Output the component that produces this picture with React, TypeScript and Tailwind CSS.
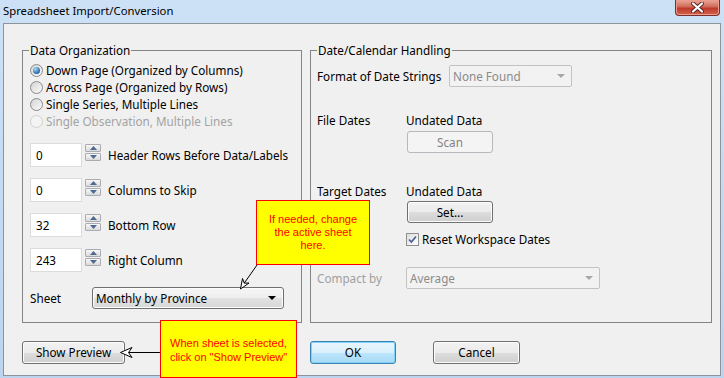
import React from "react";

const btnFace =
  "bg-[linear-gradient(#f2f2f2,#ebebeb_50%,#dddddd_50%,#cfcfcf)] shadow-[inset_0_0_0_1px_#fcfcfc]";

function Radio({ label, checked = false, disabled = false }: { label: string; checked?: boolean; disabled?: boolean }) {
  return (
    <div className="flex h-[17px] items-center">
      <span
        className={`flex h-[13px] w-[13px] items-center justify-center rounded-full border ${
          disabled ? "border-[#d0d0d0] bg-[#f4f4f4]" : "border-[#8a8a8a] bg-linear-to-br from-[#d4d4d4] to-[#fbfbfb]"
        }`}
      >
        {checked && (
          <span className="h-[7px] w-[7px] rounded-full bg-[radial-gradient(circle_at_35%_30%,#a6d8f7,#1d5fa3_75%)]" />
        )}
      </span>
      <span className={`ml-[3px] ${disabled ? "text-[#a3a3a3]" : "text-black"}`}>{label}</span>
    </div>
  );
}

function SpinBtn({ up = false }: { up?: boolean }) {
  return (
    <div className="flex h-[8px] items-center justify-center rounded-[1px] border border-[#a9adb3] bg-linear-to-b from-[#f7f7f7] to-[#dadada]">
      <svg width="7" height="4" viewBox="0 0 7 4">
        <path d={up ? "M0 4L3.5 0L7 4Z" : "M0 0L3.5 4L7 0Z"} fill="#4f6a8f" />
      </svg>
    </div>
  );
}

function SpinRow({ value, label }: { value: string; label: string }) {
  return (
    <div className="flex h-[24px] items-start">
      <div className="flex h-[24px] w-[52px] items-center border border-[#dcdcdc] bg-white pl-[5px]">{value}</div>
      <div className="ml-[3px] mt-[1px] flex w-[16px] flex-col gap-[1px]">
        <SpinBtn up />
        <SpinBtn />
      </div>
      <span className="ml-[7px] self-center">{label}</span>
    </div>
  );
}

function DisabledSelect({ text, width }: { text: string; width: string }) {
  return (
    <div
      className={`flex h-[22px] ${width} items-center justify-between rounded-[2px] border border-[#c3c3c3] bg-[#f2f2f2] pl-[3px] pr-[6px] text-[#8a8a8a]`}
    >
      <span>{text}</span>
      <svg width="8" height="4" viewBox="0 0 8 4">
        <path d="M0 0L4 4L8 0Z" fill="#a8a8a8" />
      </svg>
    </div>
  );
}

export default function App() {
  return (
    <div className="relative h-[378px] w-[724px] overflow-hidden bg-linear-to-b from-[#cde1f6] to-[#bcd4ee] font-['Noto_Sans',sans-serif] text-[11.7px] leading-[15px] text-black">
      {/* title bar */}
      <div className="flex h-[23px] items-start justify-between">
        <span className="ml-[3px] mt-[3px] text-[11.3px]">Spreadsheet Import/Conversion</span>
        <div className="mr-[4px] flex h-[16px] w-[45px] items-center justify-center rounded-b-[4px] border border-t-0 border-[#7a2f2a] bg-[linear-gradient(#e8a99b,#d06a58_45%,#c0392b_55%,#d0644c)] shadow-[inset_0_0_0_1px_#ec9b8c]">
          <svg width="13" height="11" viewBox="0 0 13 11">
            <path d="M2 1.5L11 9.5M11 1.5L2 9.5" stroke="#5a2420" strokeWidth="4" strokeLinecap="round" />
            <path d="M2 1.5L11 9.5M11 1.5L2 9.5" stroke="#ffffff" strokeWidth="2.2" strokeLinecap="round" />
          </svg>
        </div>
      </div>

      {/* client area */}
      <div className="mx-[3px] h-[353px] border border-[#8d949c] bg-[#f0f0f0] pl-[18px] pt-[19px]">
        <div className="flex gap-[8px]">
          {/* Data Organization */}
          <fieldset className="h-[280px] w-[280px] border border-[#848484] pl-[7px]">
            <legend className="-ml-px px-px">Data Organization</legend>
            <div className="mt-[4px] flex flex-col">
              <Radio label="Down Page (Organized by Columns)" checked />
              <Radio label="Across Page (Organized by Rows)" />
              <Radio label="Single Series, Multiple Lines" />
              <Radio label="Single Observation, Multiple Lines" disabled />
            </div>
            <div className="mt-[13px] flex flex-col gap-[11px]">
              <SpinRow value="0" label="Header Rows Before Data/Labels" />
              <SpinRow value="0" label="Columns to Skip" />
              <SpinRow value="32" label="Bottom Row" />
              <SpinRow value="243" label="Right Column" />
            </div>
            <div className="mt-[15px] flex h-[22px] items-center">
              <span className="w-[62px]">Sheet</span>
              <div className="flex h-[22px] w-[192px] items-center justify-between rounded-[3px] border border-[#707070] bg-[linear-gradient(#f6f6f6,#eeeeee_50%,#e2e2e2_50%,#d8d8d8)] pl-[3px] pr-[7px] shadow-[inset_0_0_0_1px_#fcfcfc]">
                <span>Monthly by Province</span>
                <svg width="8" height="4" viewBox="0 0 8 4">
                  <path d="M0 0L4 4L8 0Z" fill="#000000" />
                </svg>
              </div>
            </div>
          </fieldset>

          {/* Date/Calendar Handling */}
          <fieldset className="h-[280px] w-[402px] border border-[#848484] pl-[6px]">
            <legend className="px-px">Date/Calendar Handling</legend>
            <div className="mt-[7px] flex h-[22px] items-center">
              <span className="w-[132px]">Format of Date Strings</span>
              <DisabledSelect text="None Found" width="w-[123px]" />
            </div>
            <div className="mt-[25px] flex h-[16px] items-center">
              <span className="w-[89px]">File Dates</span>
              <span>Undated Data</span>
            </div>
            <div className="ml-[90px] mt-[3px] flex h-[22px] w-[86px] items-center justify-center rounded-[3px] border border-[#b5b9bd] bg-[#f4f4f4] text-[#838383]">
              Scan
            </div>
            <div className="mt-[30px] flex h-[16px] items-center">
              <span className="w-[89px]">Target Dates</span>
              <span>Undated Data</span>
            </div>
            <div className={`ml-[90px] mt-[2px] flex h-[22px] w-[86px] items-center justify-center rounded-[3px] border border-[#707070] ${btnFace}`}>
              Set...
            </div>
            <div className="ml-[89px] mt-[9px] flex h-[14px] items-center">
              <span className="flex h-[13px] w-[13px] items-center justify-center border border-[#8e8f8f] bg-linear-to-br from-[#dcdcdc] to-[#ffffff]">
                <svg width="9" height="9" viewBox="0 0 9 9">
                  <path d="M1 4.5L3.4 7L8 1.5" stroke="#4a5f97" strokeWidth="1.7" fill="none" />
                </svg>
              </span>
              <span className="ml-[3px]">Reset Workspace Dates</span>
            </div>
            <div className="mt-[21px] flex h-[22px] items-center">
              <span className="w-[89px] text-[#a0a0a0]">Compact by</span>
              <DisabledSelect text="Average" width="w-[194px]" />
            </div>
          </fieldset>
        </div>

        {/* dialog buttons */}
        <div className="mt-[18px] flex">
          <div className={`flex h-[23px] w-[103px] items-center justify-center rounded-[3px] border border-[#707070] ${btnFace}`}>
            Show Preview
          </div>
          <div className="ml-[185px] flex h-[23px] w-[86px] items-center justify-center rounded-[3px] border border-[#3c7fb1] bg-[linear-gradient(#eaf6fd,#d9f0fc_50%,#bee6fd_50%,#a7d9f5)] shadow-[inset_0_0_0_1px_#7fd3f8]">
            OK
          </div>
          <div className={`ml-[37px] flex h-[23px] w-[87px] items-center justify-center rounded-[3px] border border-[#707070] ${btnFace}`}>
            Cancel
          </div>
        </div>
      </div>

      {/* annotation callouts */}
      <div className="absolute left-[256px] top-[200px] h-[65px] w-[114px] border border-[#ff0000] bg-[#ffff00] pt-[12px] text-center font-['Liberation_Sans',Arial,sans-serif] text-[11px] leading-[13px] text-[#ff0000]">
        If needed, change
        <br />
        the active sheet
        <br />
        here.
      </div>
      <div className="absolute left-[160px] top-[320px] h-[58px] w-[137px] border border-[#ff0000] bg-[#ffff00] pt-[15px] text-center font-['Liberation_Sans',Arial,sans-serif] text-[11px] leading-[14px] text-[#ff0000]">
        When sheet is selected,
        <br />
        click on "Show Preview"
      </div>

      <svg className="pointer-events-none absolute inset-0" width="724" height="378" viewBox="0 0 724 378">
        <path d="M257 265L244 283.5" stroke="#000" strokeWidth="1" fill="none" />
        <path d="M240.5 289L249 283L244.3 283.2L242.5 278.5Z" stroke="#000" strokeWidth="1" fill="#fff" />
        <path d="M160 352.5L128 352.5" stroke="#000" strokeWidth="1" fill="none" />
        <path d="M120.5 352.5L132 347.5L128.5 352.5L132 357.5Z" stroke="#000" strokeWidth="1" fill="#fff" />
      </svg>
    </div>
  );
}
